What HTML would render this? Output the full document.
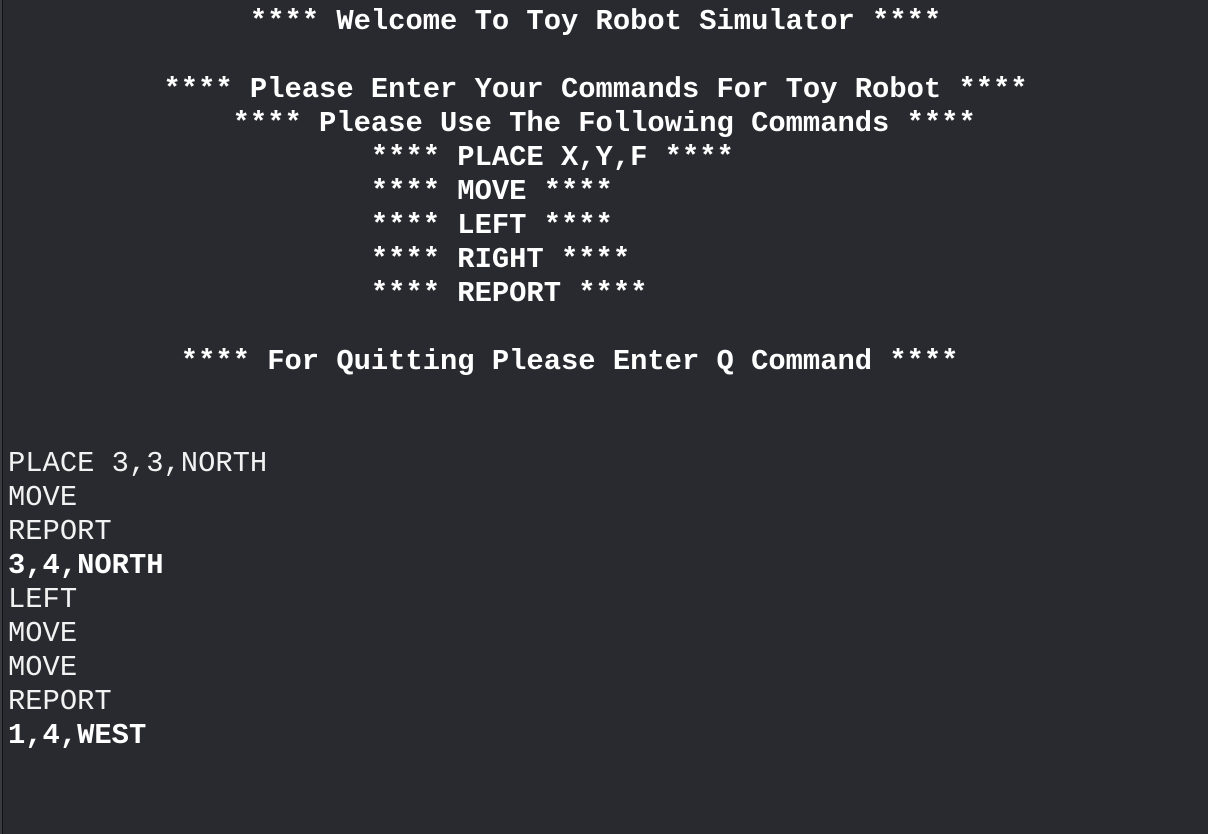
<!DOCTYPE html>
<html><head><meta charset="utf-8"><style>
html,body{margin:0;padding:0;width:1208px;height:834px;overflow:hidden;background:#292a2f;}
.b{position:absolute;left:0;top:0;width:2px;height:834px;background:#3a3b40;border-right:1px solid #111;}
pre{position:absolute;left:8px;top:5px;margin:0;font-family:"Liberation Mono",monospace;font-size:28.8px;line-height:34px;color:#f2f2f2;}
b{font-weight:bold;color:#fff}
</style></head><body><div class="b"></div><pre><b>              **** Welcome To Toy Robot Simulator ****

         **** Please Enter Your Commands For Toy Robot ****
             **** Please Use The Following Commands ****
                     **** PLACE X,Y,F ****
                     **** MOVE ****
                     **** LEFT ****
                     **** RIGHT ****
                     **** REPORT ****

          **** For Quitting Please Enter Q Command ****</b>


PLACE 3,3,NORTH
MOVE
REPORT
<b>3,4,NORTH</b>
LEFT
MOVE
MOVE
REPORT
<b>1,4,WEST</b></pre></body></html>
